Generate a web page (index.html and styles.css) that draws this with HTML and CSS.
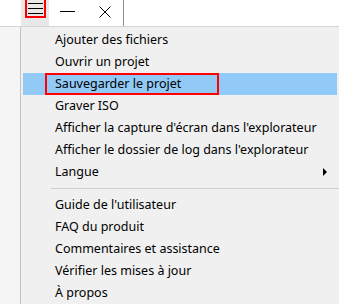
FILE: index.html
```html
<!DOCTYPE html>
<html lang="fr">
<head>
    <meta charset="UTF-8">
    <title>Menu</title>
    <link rel="stylesheet" href="styles.css">
</head>
<body>

<div class="titlebar">
    <div class="menu-button">
        <div class="menu-icon">
            <svg width="15" height="12" viewBox="0 0 15 12">
                <path d="M0 1.5h15M0 6.5h15M0 11.5h15" stroke="#000" stroke-width="1"/>
            </svg>
        </div>
    </div>
    <div class="win-button">
        <svg width="15" height="3" viewBox="0 0 15 3">
            <path d="M0 1.5h15" stroke="#000" stroke-width="1"/>
        </svg>
    </div>
    <div class="win-button">
        <svg width="12" height="12" viewBox="0 0 12 12">
            <path d="M0.5 0.5l11 11M11.5 0.5l-11 11" stroke="#000" stroke-width="1"/>
        </svg>
    </div>
    <div class="divider"></div>
</div>

<div class="menu">
    <div class="item">Ajouter des fichiers</div>
    <div class="item">Ouvrir un projet</div>
    <div class="item active"><span class="marked">Sauvegarder le projet</span></div>
    <div class="item">Graver ISO</div>
    <div class="item">Afficher la capture d'écran dans l'explorateur</div>
    <div class="item">Afficher le dossier de log dans l'explorateur</div>
    <div class="item submenu">Langue</div>
    <div class="separator"></div>
    <div class="item">Guide de l'utilisateur</div>
    <div class="item">FAQ du produit</div>
    <div class="item">Commentaires et assistance</div>
    <div class="item">Vérifier les mises à jour</div>
    <div class="item">À propos</div>
</div>

</body>
</html>
```

FILE: styles.css
```css
body {
    margin: 0;
    font-family: 'Noto Sans', sans-serif;
    font-size: 12.5px;
    color: #000;
    background-color: #f5f5f5;
    height: 304px;
    overflow: hidden;
    display: flex;
    flex-direction: column;
}
.titlebar {
    display: flex;
    height: 26px;
    flex-shrink: 0;
    background-color: #fff;
    border-bottom: 1px solid #d4d4d4;
    padding-left: 21px;
}
.menu-button {
    width: 28px;
    background-color: #e8e8e8;
}
.menu-icon {
    width: 17px;
    height: 16px;
    margin-left: 4px;
    border: 2px solid #f00;
    border-top: none;
    display: flex;
    justify-content: center;
    align-items: center;
}
.win-button {
    width: 37px;
    display: flex;
    justify-content: center;
    align-items: center;
    padding-bottom: 3px;
}
.divider {
    width: 1px;
    background-color: #8c8c8c;
}
.menu {
    flex: 1;
    margin-left: 20px;
    border-left: 1px solid #c2c2c2;
    background-color: #f0f0f0;
    padding-top: 2px;
}
.item {
    height: 22px;
    line-height: 22px;
    margin: 0 2px;
    padding-left: 32px;
    position: relative;
    white-space: nowrap;
}
.item.active {
    background-color: #91c9f7;
}
.marked {
    display: inline-block;
    height: 18px;
    line-height: 18px;
    margin-left: -10px;
    padding: 0 36px 0 8px;
    border: 2px solid #f00;
}
.submenu::after {
    content: '';
    position: absolute;
    right: 10px;
    top: 7px;
    border-left: 4px solid #000;
    border-top: 4px solid transparent;
    border-bottom: 4px solid transparent;
}
.separator {
    height: 1px;
    margin: 5px 0 5px 30px;
    background-color: #d0d0d0;
}
```
